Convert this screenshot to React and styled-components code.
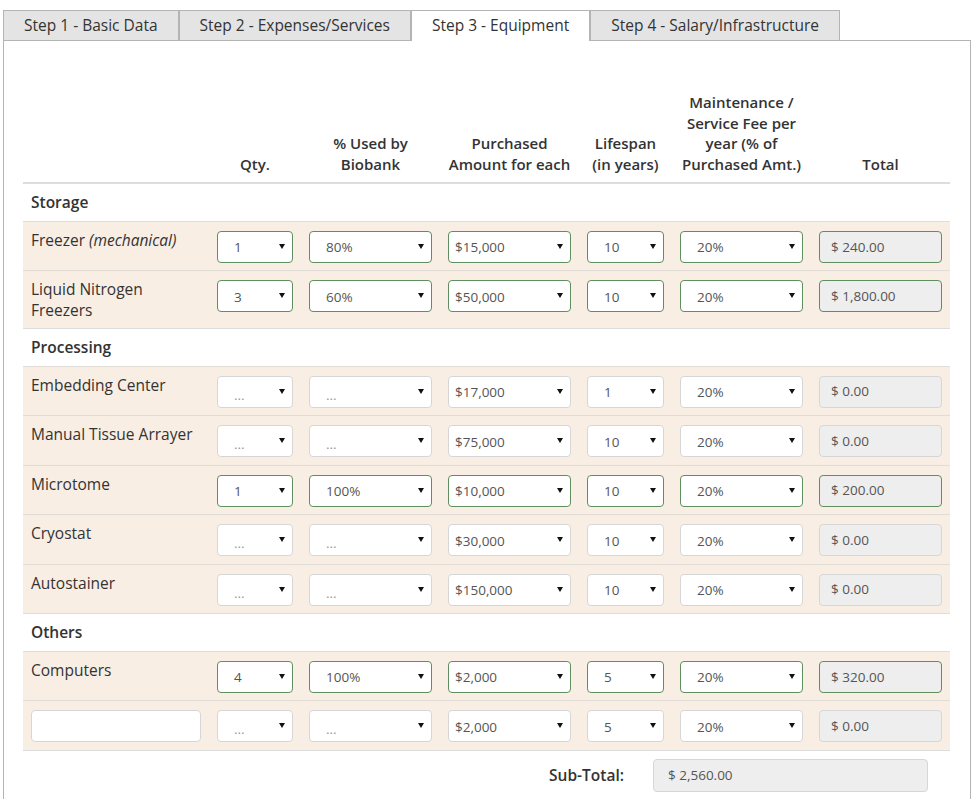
import React from "react";
import styled, { createGlobalStyle } from "styled-components";

const GlobalStyle = createGlobalStyle`
  html, body { margin: 0; padding: 0; background: #fff; }
  body {
    font-family: "Open Sans", "Liberation Sans", Arial, sans-serif;
    font-size: 15.5px;
    color: #333;
    line-height: 20.6px;
  }
  * { box-sizing: border-box; }
`;

const Page = styled.div`
  padding: 10px 0 0 3px;
  width: 971px;
`;

const TabBar = styled.div`
  display: flex;
  align-items: flex-end;
  height: 30px;
`;

const Tab = styled.div`
  height: ${(p) => (p.$active ? "31px" : "30px")};
  padding: 0 20px;
  line-height: 28px;
  border: 1px solid #b4b4b4;
  border-bottom: none;
  background: ${(p) => (p.$active ? "#fff" : "#e4e4e4")};
  color: #333;
  white-space: nowrap;
  position: relative;
  z-index: ${(p) => (p.$active ? 1 : 0)};
  margin-bottom: ${(p) => (p.$active ? "-1px" : "0")};
`;

const Panel = styled.div`
  border: 1px solid #b4b4b4;
  border-bottom: none;
  width: 968px;
  min-height: 760px;
  padding: 43px 19px 0 19px;
`;

const Table = styled.table`
  width: 927px;
  table-layout: fixed;
  border-collapse: collapse;
  border-bottom: 1px solid #ddd;
`;

const Th = styled.th`
  padding: 8px 4px;
  vertical-align: bottom;
  text-align: ${(p) => (p.$left ? "left" : "center")};
  font-weight: 600;
  font-size: 15px;
  border-bottom: 2px solid #ddd;
  color: #333;
`;

const SectionCell = styled.td`
  padding: 8px;
  font-weight: 600;
  border-top: ${(p) => (p.$first ? "none" : "1px solid #ddd")};
`;

const ItemRow = styled.tr`
  background: #f9eee4;
`;

const Cell = styled.td`
  padding: 9px 8px 7.5px 8px;
  vertical-align: top;
  border-top: 1px solid #e2dcd6;
`;

const LabelCell = styled(Cell)`
  padding-top: 8px;
  color: #333;
`;

const Note = styled.em`
  font-style: italic;
`;

const SelectBox = styled.div`
  position: relative;
  display: flex;
  align-items: center;
  height: 32px;
  width: 100%;
  background: #fff;
  border: 1px solid ${(p) => (p.$valid ? "#5f8f5f" : "#d6d6d6")};
  border-radius: 4px;
  padding-left: ${(p) => p.$indent}px;
  font-size: 13.5px;
  color: ${(p) => (p.$empty ? "#999" : "#555")};
  line-height: 18px;
`;

const SelectValue = styled.span`
  flex: 1;
  white-space: nowrap;
  padding-top: ${(p) => (p.$empty ? "6px" : "1px")};
`;

const Arrow = styled.svg`
  position: absolute;
  right: 7px;
  top: 12px;
  width: 6px;
  height: 5px;
`;

const TotalBox = styled.div`
  display: flex;
  align-items: center;
  height: 32px;
  width: 100%;
  background: #eee;
  border: 1px solid ${(p) => (p.$valid ? "#5f8f5f" : "#d6d6d6")};
  border-radius: 4px;
  padding: 0 11px;
  font-size: 13.5px;
  color: #555;
`;

const TextInput = styled.input`
  display: block;
  height: 32px;
  width: 100%;
  margin-top: 1px;
  background: #fff;
  border: 1px solid #d6d6d6;
  border-radius: 4px;
  padding: 0 12px;
  font: inherit;
  font-size: 13.5px;
`;

const SubtotalRow = styled.div`
  display: flex;
  justify-content: flex-end;
  align-items: center;
  padding-right: 23px;
  margin-top: 8px;
`;

const SubtotalLabel = styled.div`
  font-weight: 600;
  margin-right: 29px;
`;

const SubtotalBox = styled(TotalBox)`
  width: 275px;
  height: 33px;
  padding: 0 14px;
`;

function Select({ value, valid, indent = 16 }) {
  const empty = value === "...";
  return (
    <SelectBox $valid={valid} $indent={indent} $empty={empty}>
      <SelectValue $empty={empty}>{value}</SelectValue>
      <Arrow viewBox="0 0 6 5">
        <path d="M0 0 L6 0 L3 5 Z" fill="#111" />
      </Arrow>
    </SelectBox>
  );
}

const sections = [
  {
    title: "Storage",
    items: [
      { label: <>Freezer <Note>(mechanical)</Note></>, v: ["1", "80%", "$15,000", "10", "20%"], total: "$ 240.00", valid: true },
      { label: "Liquid Nitrogen Freezers", v: ["3", "60%", "$50,000", "10", "20%"], total: "$ 1,800.00", valid: true },
    ],
  },
  {
    title: "Processing",
    items: [
      { label: "Embedding Center", v: ["...", "...", "$17,000", "1", "20%"], total: "$ 0.00" },
      { label: "Manual Tissue Arrayer", v: ["...", "...", "$75,000", "10", "20%"], total: "$ 0.00" },
      { label: "Microtome", v: ["1", "100%", "$10,000", "10", "20%"], total: "$ 200.00", valid: true },
      { label: "Cryostat", v: ["...", "...", "$30,000", "10", "20%"], total: "$ 0.00" },
      { label: "Autostainer", v: ["...", "...", "$150,000", "10", "20%"], total: "$ 0.00" },
    ],
  },
  {
    title: "Others",
    items: [
      { label: "Computers", v: ["4", "100%", "$2,000", "5", "20%"], total: "$ 320.00", valid: true },
      { input: true, v: ["...", "...", "$2,000", "5", "20%"], total: "$ 0.00" },
    ],
  },
];

const colWidths = [186, 92, 139, 139, 93, 139, 139];

export default function App() {
  return (
    <Page>
      <GlobalStyle />
      <TabBar>
        <Tab>Step 1 - Basic Data</Tab>
        <Tab>Step 2 - Expenses/Services</Tab>
        <Tab $active>Step 3 - Equipment</Tab>
        <Tab>Step 4 - Salary/Infrastructure</Tab>
      </TabBar>
      <Panel>
        <Table>
          <colgroup>
            {colWidths.map((w, i) => (
              <col key={i} style={{ width: w }} />
            ))}
          </colgroup>
          <thead>
            <tr>
              <Th $left></Th>
              <Th>Qty.</Th>
              <Th>% Used by<br />Biobank</Th>
              <Th>Purchased<br />Amount for each</Th>
              <Th>Lifespan<br />(in years)</Th>
              <Th>Maintenance /<br />Service Fee per<br />year (% of<br />Purchased Amt.)</Th>
              <Th>Total</Th>
            </tr>
          </thead>
          <tbody>
            {sections.map((s, si) => (
              <React.Fragment key={s.title}>
                <tr>
                  <SectionCell $first={si === 0} colSpan={7}>{s.title}</SectionCell>
                </tr>
                {s.items.map((it, ii) => (
                  <ItemRow key={ii}>
                    <LabelCell>{it.input ? <TextInput type="text" /> : it.label}</LabelCell>
                    {it.v.map((val, vi) => (
                      <Cell key={vi}>
                        <Select value={val} valid={it.valid} indent={vi === 2 ? 6 : 16} />
                      </Cell>
                    ))}
                    <Cell>
                      <TotalBox $valid={it.valid}>{it.total}</TotalBox>
                    </Cell>
                  </ItemRow>
                ))}
              </React.Fragment>
            ))}
          </tbody>
        </Table>
        <SubtotalRow>
          <SubtotalLabel>Sub-Total:</SubtotalLabel>
          <SubtotalBox>$ 2,560.00</SubtotalBox>
        </SubtotalRow>
      </Panel>
    </Page>
  );
}
